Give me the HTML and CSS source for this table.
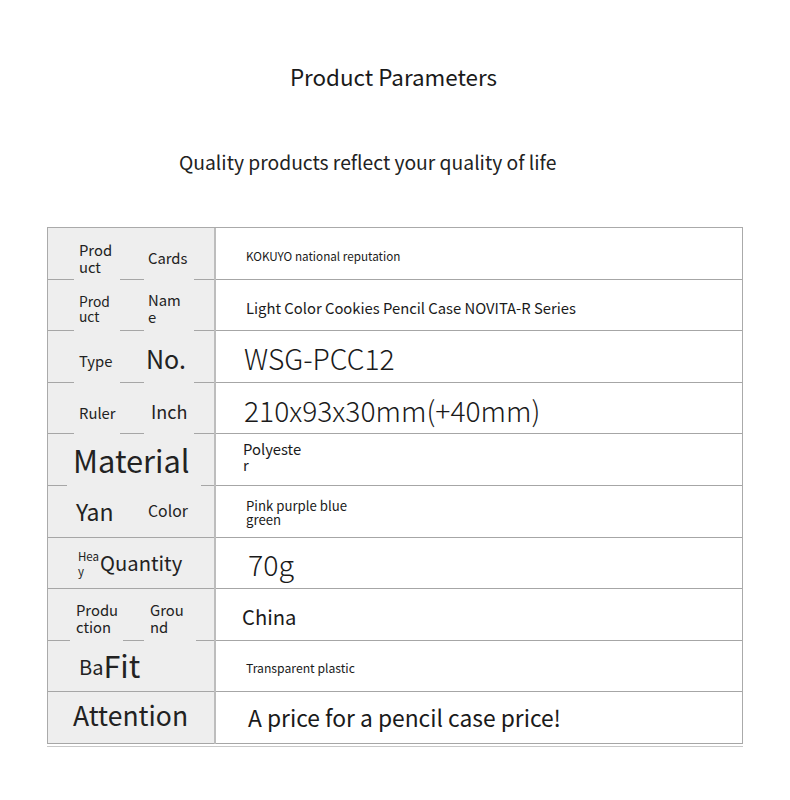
FILE: index.html
```html
<!DOCTYPE html>
<html>
<head>
<meta charset="utf-8">
<link rel="stylesheet" href="styles.css">
</head>
<body>
<div class="page">
  <h1 class="title">Product Parameters</h1>
  <p class="subtitle">Quality products reflect your quality of life</p>

  <div class="table">
    <div class="row">
      <div class="lc">
        <div class="labels">
          <span class="l1 f14">Prod<br>uct</span>
          <span class="l2 f14">Cards</span>
        </div>
        <div class="rule"><i class="s1"></i><i class="s2"></i><i class="s3"></i></div>
      </div>
      <div class="rc"><span class="v-kokuyo">KOKUYO national reputation</span></div>
    </div>

    <div class="row">
      <div class="lc">
        <div class="labels">
          <span class="l1 f13">Prod<br>uct</span>
          <span class="l2 f14 up">Nam<br>e</span>
        </div>
        <div class="rule"><i class="s1"></i><i class="s2"></i><i class="s3"></i></div>
      </div>
      <div class="rc"><span class="v-name">Light Color Cookies Pencil Case NOVITA-R Series</span></div>
    </div>

    <div class="row">
      <div class="lc">
        <div class="labels">
          <span class="l1 f14">Type</span>
          <span class="l2 no">No.</span>
        </div>
        <div class="rule"><i class="s1"></i><i class="s2"></i><i class="s3"></i></div>
      </div>
      <div class="rc"><span class="v-big">WSG-PCC12</span></div>
    </div>

    <div class="row">
      <div class="lc">
        <div class="labels">
          <span class="l1 f14">Ruler</span>
          <span class="l2 inch">Inch</span>
        </div>
        <div class="rule"><i class="s1"></i><i class="s2"></i><i class="s3"></i></div>
      </div>
      <div class="rc"><span class="v-big">210x93x30mm(+40mm)</span></div>
    </div>

    <div class="row">
      <div class="lc">
        <div class="labels single">
          <span class="material">Material</span>
        </div>
        <div class="rule wide"><i class="s1"></i><i class="s3"></i></div>
      </div>
      <div class="rc top"><span class="v-poly">Polyeste<br>r</span></div>
    </div>

    <div class="row">
      <div class="lc">
        <div class="labels yanrow">
          <span class="yan">Yan</span>
          <span class="color">Color</span>
        </div>
        <div class="rule full"></div>
      </div>
      <div class="rc"><span class="v-pink">Pink purple blue<br>green</span></div>
    </div>

    <div class="row">
      <div class="lc">
        <div class="labels single qrow">
          <span class="hea">Hea<br>y</span><span class="quantity">Quantity</span>
        </div>
        <div class="rule full"></div>
      </div>
      <div class="rc"><span class="v-70">70g</span></div>
    </div>

    <div class="row">
      <div class="lc">
        <div class="labels prow">
          <span class="produ">Produ<br>ction</span>
          <span class="ground">Grou<br>nd</span>
        </div>
        <div class="rule prule"><i class="s1"></i><i class="s2"></i><i class="s3"></i></div>
      </div>
      <div class="rc"><span class="v-china">China</span></div>
    </div>

    <div class="row">
      <div class="lc">
        <div class="labels single fitrow">
          <span class="ba">Ba</span><span class="fit">Fit</span>
        </div>
        <div class="rule full"></div>
      </div>
      <div class="rc"><span class="v-plastic">Transparent plastic</span></div>
    </div>

    <div class="row last">
      <div class="lc">
        <div class="labels single">
          <span class="attention">Attention</span>
        </div>
        <div class="rule full"></div>
      </div>
      <div class="rc"><span class="v-price">A price for a pencil case price!</span></div>
    </div>
  </div>
  <div class="underline"></div>
</div>
</body>
</html>
```

FILE: styles.css
```css
* { box-sizing: border-box; }

html, body {
  margin: 0;
  padding: 0;
  background: #fff;
}

body {
  font-family: "Noto Sans CJK SC", "Noto Sans", sans-serif;
  color: #1a1a1a;
}

.page {
  width: 790px;
  height: 800px;
  overflow: hidden;
}

.title {
  margin: 0;
  padding-top: 62px;
  font-size: 22.4px;
  line-height: 28px;
  font-weight: 400;
  text-align: center;
  padding-right: 3px;
}

.subtitle {
  margin: 58px 0 0 0;
  padding-left: 179px;
  font-size: 19.3px;
  line-height: 28px;
  color: #222;
}

.table {
  margin: 51px 0 0 47px;
  width: 696px;
  border-top: 1px solid #aaa;
  border-left: 1px solid #aaa;
  border-right: 1px solid #aaa;
}

.row {
  display: grid;
  grid-template-columns: 168px 1fr;
  height: 51.6px;
}

.lc {
  background: #eeeeee;
  border-right: 2px solid #bdbdbd;
  display: flex;
  flex-direction: column;
}

.labels {
  flex: 1;
  display: grid;
  grid-template-columns: 69px auto;
  align-items: center;
  padding-left: 31px;
  padding-top: 9px;
  color: #222;
}

.labels span { display: block; }

.f14 { font-size: 14.8px; line-height: 17px; }
.f13 { font-size: 13.8px; line-height: 15px; }
.up { margin-top: -2px; }

.no { font-size: 25px; line-height: 28px; margin-left: -2px; margin-top: -6px; }
.inch { font-size: 18px; line-height: 22px; margin-left: 3px; margin-top: -4px; }

.single {
  display: flex;
  align-items: center;
  padding-left: 0;
  padding-top: 0;
}

.material { font-size: 30.8px; line-height: 34px; margin-left: 25px; }

.yanrow { grid-template-columns: 72px auto; padding-left: 28px; padding-top: 0; }
.yan { font-size: 23px; line-height: 26px; }
.color { font-size: 15.8px; line-height: 20px; }

.qrow { align-items: center; padding-left: 30px; padding-top: 1px; }
.hea { font-size: 11.5px; line-height: 15px; margin-top: 1px; }
.quantity { font-size: 20.2px; line-height: 24px; margin-left: 1px; }

.prow { grid-template-columns: 74px auto; padding-left: 28px; padding-top: 8px; }
.produ { font-size: 14.8px; line-height: 17px; }
.ground { font-size: 14.8px; line-height: 17px; }

.fitrow { padding-left: 31px; padding-bottom: 3px; }
.ba { font-size: 20px; line-height: 24px; margin-top: 4px; }
.fit { font-size: 30.5px; line-height: 34px; }

.attention { font-size: 26.5px; line-height: 30px; margin-left: 25px; margin-top: -5px; }

.rule {
  height: 1px;
  display: flex;
  flex: none;
}

.rule i { display: block; height: 1px; background: #a6a6a6; }
.rule .s1 { width: 26px; }
.rule .s2 { width: 24px; margin-left: 46px; }
.rule .s3 { flex: 1; margin-left: 50px; }

.rule.wide .s1 { width: 19px; }
.rule.wide .s3 { margin-left: 134px; }

.rule.prule .s1 { width: 22px; }
.rule.prule .s2 { width: 21px; margin-left: 53px; }
.rule.prule .s3 { margin-left: 52px; }

.rule.full { background: #a6a6a6; }

.rc {
  border-bottom: 1px solid #a6a6a6;
  display: flex;
  align-items: center;
  padding-left: 30px;
  color: #1a1a1a;
}

.rc.top { align-items: flex-start; padding-top: 7px; padding-left: 27px; }

.v-kokuyo { font-size: 11.7px; line-height: 14px; margin-top: 6px; }
.v-name { font-size: 14.8px; line-height: 18px; margin-top: 6px; }
.v-big { font-size: 28.2px; line-height: 34px; font-weight: 300; margin-left: -2px; margin-top: 4px; }
.v-poly { font-size: 14.8px; line-height: 16px; }
.v-pink { font-size: 13.2px; line-height: 14px; margin-top: 4px; }
.v-70 { font-size: 28.5px; line-height: 34px; font-weight: 300; margin-left: 2px; margin-top: 2px; }
.v-china { font-size: 20.2px; line-height: 24px; margin-left: -4px; margin-top: 5px; }
.v-plastic { font-size: 12.2px; line-height: 14px; margin-top: 4px; }
.v-price { font-size: 22.8px; line-height: 26px; margin-left: 2px; }

.underline {
  margin: 2px 0 0 47px;
  width: 696px;
  height: 1px;
  background: #c8c8c8;
}
```
